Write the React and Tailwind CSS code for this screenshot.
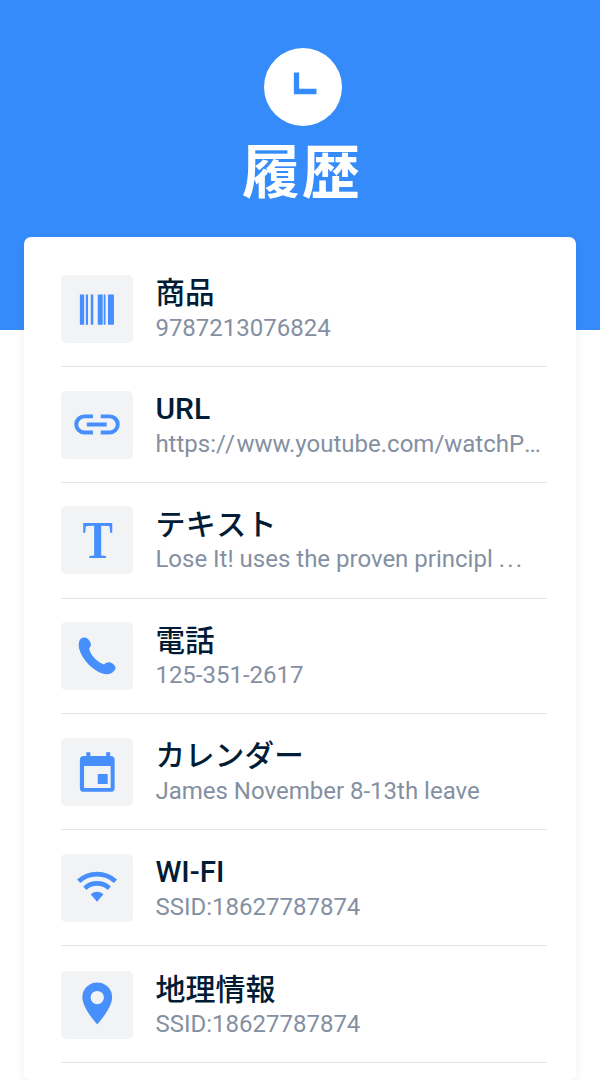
const blue = '#478ffc';

const Barcode = () => (
  <svg viewBox="0 0 71 68" className="size-full" fill={blue}>
    <path d="M18 19.300h4.300v30.500H18zM24 19.300h2.200v30.500H24zM29 19.300h2.500v30.500H29zM36 19.300h5v30.500h-5zM42 19.300h1.800v30.500H42zM46.300 19.300h6v30.500h-6z" />
  </svg>
);

const Link = () => (
  <svg viewBox="0 0 71 68" className="size-full" fill="none" stroke={blue} strokeWidth="4">
    <path d="M31.200 25.300h-8.700a8.150 8.150 0 0 0 0 16.300h8.700M39 25.300h9a8.150 8.150 0 0 1 0 16.300h-9M25 33.500h20" />
  </svg>
);

const Letter = () => (
  <span className="block origin-center scale-x-[0.86] font-['Liberation_Serif',serif] text-[53px] font-bold leading-[68px] text-[#478ffc]">T</span>
);

const Phone = () => (
  <svg viewBox="0 0 71 68" className="size-full" fill={blue}>
    <path d="M18.700 16.800c2.200-1.800 5.500-1.800 7.400.2 1.700 1.700 3 4 3 5.500 0 1.900-.9 3-1.900 4 1.600 7 8.400 14 15.300 16.100 1.500-1.900 3.500-2.700 5.500-2.300 2.500.5 5.200 2.600 5.800 4.800.5 2.400-1.600 5-4.300 6.300-4.200 2.100-9.700.6-14.700-2.600-8-5-14.500-12.400-17.200-21.100-1.200-4-.9-8.900 1.100-10.900z" />
  </svg>
);

const Calendar = () => (
  <svg viewBox="0 0 71 68" className="size-full" fill={blue}>
    <path fillRule="evenodd" d="M24.500 14h4v4h16v-4h4v4h.500a4 4 0 0 1 4 4v28a4 4 0 0 1-4 4H22a4 4 0 0 1-4-4V22a4 4 0 0 1 4-4h2.500zM22.200 28v22h26.800V28zM36 36h10v10H36z" />
  </svg>
);

const Wifi = () => (
  <svg viewBox="0 0 71 68" className="size-full" fill="none" stroke={blue} strokeWidth="4.800">
    <path d="M16.800 27.200a27.500 27.500 0 0 1 37 0M23 34.200a18.300 18.300 0 0 1 24.600 0" />
    <path d="M28.800 40.200q6.500-5 13 0L35.300 47.800z" fill={blue} stroke="none" />
  </svg>
);

const Pin = () => (
  <svg viewBox="0 0 71 68" className="size-full" fill={blue}>
    <path fillRule="evenodd" d="M35.500 11.300a15 15 0 0 0-15 15c0 11.200 15 27.200 15 27.200s15-16 15-27.200a15 15 0 0 0-15-15zm0 8.500a6.700 6.700 0 1 1 0 13.400 6.700 6.700 0 0 1 0-13.400z" />
  </svg>
);

const rows = [
  { title: '商品', detail: '9787213076824', Icon: Barcode, size: 'h-[116px] pt-6', text: 'text-[29.500px] leading-[37px]' },
  {
    title: 'URL',
    detail: <>https:<span className="tracking-[1.600px]">//</span>www.youtube.com/watchP<span className="tracking-[-1px]">...</span></>,
    Icon: Link, size: 'h-[116px] pt-[23.500px]', text: 'text-[30px] leading-9',
  },
  {
    title: 'テキスト',
    detail: <>Lose It! uses the proven principl <span className="tracking-[2.200px]">...</span></>,
    Icon: Letter, size: 'h-[116px] pt-[23px]', text: 'text-[30px] leading-[38px] tracking-[0.400px]',
  },
  { title: '電話', detail: '125-351-2617', Icon: Phone, size: 'h-[115px] pt-[23px]', text: 'text-[29.500px] leading-[38px]' },
  { title: 'カレンダー', detail: 'James November 8-13th leave', Icon: Calendar, size: 'h-[116px] pt-[23.500px]', text: 'text-[29.500px] leading-[37px] tracking-[0.200px]' },
  { title: 'WI-FI', detail: 'SSID:18627787874', Icon: Wifi, size: 'h-[116px] pt-[23.500px]', text: 'text-[29.500px] leading-9' },
  { title: '地理情報', detail: 'SSID:18627787874', Icon: Pin, size: 'h-[117px] pt-[24.500px]', text: 'text-[30px] leading-[37px]' },
];

export default function App() {
  return (
    <div className="flex h-[1080px] w-[600px] flex-col overflow-hidden bg-white font-[Roboto,'Noto_Sans_CJK_JP',sans-serif]">
      <header className="flex h-[330px] shrink-0 flex-col items-center bg-[#358bf9] pt-12">
        <svg viewBox="0 0 78 78" className="ml-1.5 size-[78px] shrink-0">
          <circle cx="39" cy="39" r="39" fill="#fff" />
          <path d="M32.500 24.500v19h20" fill="none" stroke="#358bf9" strokeWidth="5.300" />
        </svg>
        <h1 className="ml-1 mt-[17px] text-[58px] font-bold leading-[60px] tracking-[2px] text-white">履歴</h1>
      </header>
      <main className="relative mx-6 -mt-[93px] h-[843px] shrink-0 rounded-[7px] bg-white pl-[37px] pr-[29px] pt-3.5 shadow-[0_4px_10px_rgba(0,0,0,0.07)]">
        {rows.map(({ title, detail, Icon, size, text }) => (
          <section key={title} className={`flex items-start border-b border-[#e3e4e6] ${size}`}>
            <div className="ml-[0.400px] flex h-[68px] w-[71.500px] shrink-0 justify-center rounded-[5px] bg-[#f1f3f5] pl-px">
              <Icon />
            </div>
            <div className="ml-[22.500px] whitespace-nowrap">
              <h2 className={`h-9 font-medium text-[#021c36] [font-kerning:none] ${text}`}>{title}</h2>
              <p className="text-2xl leading-[34px] text-[#8490a2]">{detail}</p>
            </div>
          </section>
        ))}
      </main>
    </div>
  );
}
